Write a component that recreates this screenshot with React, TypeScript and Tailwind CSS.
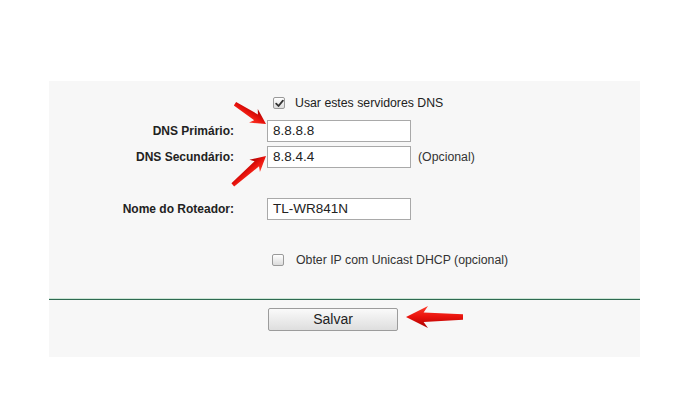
import React from "react";

function Box({ checked }: { checked?: boolean }) {
  return (
    <span className="flex h-[12px] w-[12px] shrink-0 items-center justify-center rounded-[2px] border border-[#9a9a9a] bg-gradient-to-b from-[#ffffff] to-[#dcdcdc]">
      {checked && (
        <svg width="9" height="9" viewBox="0 0 9 9">
          <path d="M1.2 4.6 L3.5 7 L7.9 1.6" fill="none" stroke="#333" strokeWidth="1.8" strokeLinecap="round" strokeLinejoin="round" />
        </svg>
      )}
    </span>
  );
}

function Field({ label, value, note, className = "" }: { label: string; value: string; note?: string; className?: string }) {
  return (
    <div className={`flex h-[22px] items-center ${className}`}>
      <div className="w-[185px] text-right text-[12px] font-bold text-[#222]">{label}</div>
      <div className="ml-[33px] flex h-[22px] w-[144px] items-center border border-[#a9a9a9] bg-white pl-[5px] text-[13.5px] text-[#222]">
        {value}
      </div>
      {note && <span className="ml-[7px] text-[12.3px] text-[#333]">{note}</span>}
    </div>
  );
}

function Arrow({ x, y, angle, len, head, half, shaft }: { x: number; y: number; angle: number; len: number; head: number; half: number; shaft: number }) {
  const pts = [
    [0, 0],
    [head, -half],
    [head * 0.8, -half * 0.4],
    [len, -shaft * 0.6],
    [len, shaft * 0.6],
    [head * 0.8, half * 0.45],
    [head, half],
  ]
    .map((p) => p.join(","))
    .join(" ");
  return (
    <g transform={`translate(${x} ${y}) rotate(${angle})`}>
      <polygon points={pts} fill="url(#red)" strokeLinejoin="round" />
    </g>
  );
}

export default function App() {
  return (
    <div className="relative h-[412px] w-[695px] overflow-hidden bg-white" style={{ fontFamily: '"Liberation Sans", Arial, sans-serif' }}>
      <div className="ml-[49px] pt-[81px]">
        <div className="flex h-[276px] w-[591px] flex-col bg-[#f7f7f7]">
          {/* DNS */}
          <div className="mt-[16px] flex h-[12px] items-center pl-[224px]">
            <Box checked />
            <span className="ml-[10px] text-[12.3px] text-[#222]">Usar estes servidores DNS</span>
          </div>
          <Field className="mt-[11px]" label="DNS Primário:" value="8.8.8.8" />
          <Field className="mt-[4px]" label="DNS Secundário:" value="8.8.4.4" note="(Opcional)" />
          <Field className="mt-[30px]" label="Nome do Roteador:" value="TL-WR841N" />

          <div className="mt-[34px] flex h-[12px] items-center pl-[223px]">
            <Box />
            <span className="ml-[12px] text-[12.3px] text-[#333]">Obter IP com Unicast DHCP (opcional)</span>
          </div>

          <div className="mt-[32px] h-[1px] bg-[#cde6d6]" />
          <div className="h-[1px] bg-[#2f6a52]" />

          <div className="mt-[8px] pl-[219px]">
            <button className="flex h-[23px] w-[130px] items-center justify-center rounded-[2px] border border-[#9c9c9c] bg-gradient-to-b from-[#fafafa] to-[#dedede] text-[14px] text-[#222]">
              Salvar
            </button>
          </div>
        </div>
      </div>

      <svg className="pointer-events-none absolute left-0 top-0" width="695" height="412">
        <defs>
          <linearGradient id="red" x1="0" y1="0" x2="0" y2="1">
            <stop offset="0" stopColor="#ff3b2a" />
            <stop offset="0.5" stopColor="#e8120c" />
            <stop offset="1" stopColor="#a80000" />
          </linearGradient>
        </defs>
        <Arrow x={266} y={124} angle={-147} len={37} head={15} half={8} shaft={3.5} />
        <Arrow x={266} y={156} angle={139} len={44} head={15} half={8} shaft={3.5} />
        <Arrow x={406} y={317} angle={0} len={57} head={22} half={11} shaft={4.5} />
      </svg>
    </div>
  );
}
